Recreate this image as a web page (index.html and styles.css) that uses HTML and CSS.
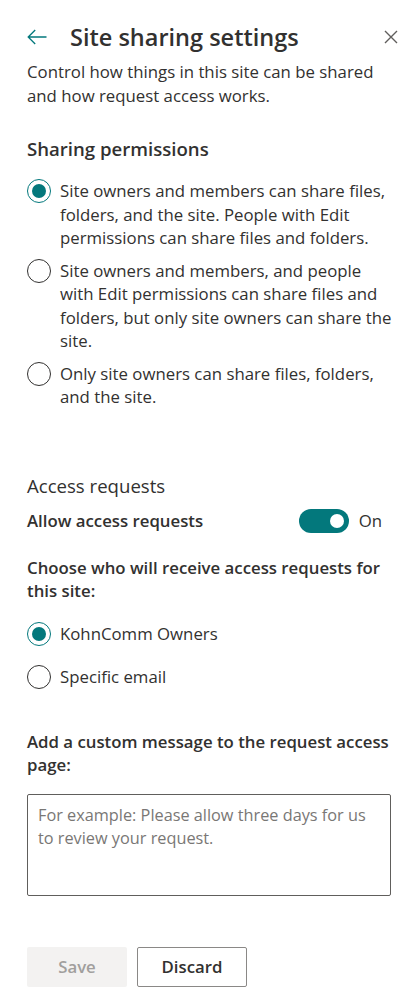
FILE: index.html
```html
<!DOCTYPE html>
<html lang="en">
<head>
<meta charset="utf-8">
<title>Site sharing settings</title>
<link rel="stylesheet" href="styles.css">
</head>
<body>
<div class="panel">
  <header class="header">
    <svg class="back" width="20" height="16" viewBox="0 0 20 16"><path d="M19.5 8H1.2M8.2 1L1.2 8l7 7" fill="none" stroke="#03787c" stroke-width="1.3"/></svg>
    <h1 class="title">Site sharing settings</h1>
    <svg class="close" width="14" height="14" viewBox="0 0 14 14"><path d="M1 1l12 12M13 1L1 13" fill="none" stroke="#605e5c" stroke-width="1.4"/></svg>
  </header>
  <p class="desc">Control how things in this site can be shared and how request access works.</p>

  <h2 class="section-title">Sharing permissions</h2>
  <div class="radios wide">
    <div class="radio checked"><span class="dot"></span><span class="label">Site owners and members can share files, folders, and the site. People with Edit permissions can share files and folders.</span></div>
    <div class="radio"><span class="dot"></span><span class="label">Site owners and members, and people with Edit permissions can share files and folders, but only site owners can share the site.</span></div>
    <div class="radio"><span class="dot"></span><span class="label">Only site owners can share files, folders, and the site.</span></div>
  </div>

  <h2 class="section-title light">Access requests</h2>
  <div class="toggle-row">
    <span class="strong">Allow access requests</span>
    <div class="toggle-wrap"><span class="toggle"><span class="knob"></span></span><span class="toggle-text">On</span></div>
  </div>
  <p class="strong choose">Choose who will receive access requests for this site:</p>
  <div class="radios spaced">
    <div class="radio checked"><span class="dot"></span><span class="label">KohnComm Owners</span></div>
    <div class="radio"><span class="dot"></span><span class="label">Specific email</span></div>
  </div>

  <p class="strong custom">Add a custom message to the request access page:</p>
  <div class="textarea"><span class="placeholder">For example: Please allow three days for us to review your request.</span></div>

  <div class="buttons">
    <button class="btn save" disabled>Save</button>
    <button class="btn discard">Discard</button>
  </div>
</div>
</body>
</html>
```

FILE: styles.css
```css
html, body {
  margin: 0;
  padding: 0;
  background: #ffffff;
}
body {
  font-family: "Open Sans", "Noto Sans", sans-serif;
  font-size: 16.8px;
  line-height: 23.5px;
  color: #323130;
}
.panel {
  padding: 20px 20px 0 27px;
}
.header {
  display: flex;
  align-items: center;
  height: 34px;
}
.back {
  flex: none;
  margin-right: 23px;
}
.title {
  flex: 1;
  margin: 0;
  font-size: 23.5px;
  font-weight: 600;
  color: #323130;
  line-height: 34px;
}
.close {
  flex: none;
  margin-right: -7px;
}
.desc {
  margin: 6px 0 0;
}
.section-title {
  margin: 29px 0 0;
  font-size: 18.6px;
  font-weight: 600;
  line-height: 26px;
}
.section-title.light {
  margin-top: 64px;
  font-weight: 400;
}
.radios {
  display: flex;
  flex-direction: column;
  gap: 9px;
  margin-top: 17px;
}
.radios.wide {
  margin-right: -4px;
}
.radios.spaced {
  gap: 19px;
  margin-top: 19px;
}
.radio {
  display: flex;
  align-items: flex-start;
}
.dot {
  flex: none;
  box-sizing: border-box;
  width: 24px;
  height: 24px;
  border: 1px solid #323130;
  border-radius: 50%;
  margin-right: 9px;
  position: relative;
}
.radio.checked .dot {
  border-color: #03787c;
}
.radio.checked .dot::after {
  content: "";
  position: absolute;
  left: 4px;
  top: 4px;
  width: 14px;
  height: 14px;
  border-radius: 50%;
  background: #03787c;
}
.label {
  flex: 1;
}
.strong {
  font-weight: 600;
}
.toggle-row {
  display: flex;
  align-items: center;
  justify-content: space-between;
  margin-top: 10px;
  padding-right: 9px;
}
.toggle-wrap {
  display: flex;
  align-items: center;
}
.toggle {
  box-sizing: border-box;
  width: 50px;
  height: 24px;
  border-radius: 12px;
  background: #03787c;
  display: flex;
  align-items: center;
  justify-content: flex-end;
  padding-right: 5px;
}
.knob {
  width: 14px;
  height: 14px;
  border-radius: 50%;
  background: #ffffff;
}
.toggle-text {
  margin-left: 10px;
}
.choose {
  margin: 23px 0 0;
}
.custom {
  margin: 41px 0 0;
}
.textarea {
  box-sizing: border-box;
  margin-top: 17px;
  height: 102px;
  border: 1px solid #605e5c;
  border-radius: 2px;
  padding: 9px 10px;
  font-size: 16.3px;
}
.placeholder {
  color: #797775;
}
.buttons {
  display: flex;
  gap: 10px;
  margin-top: 51px;
}
.btn {
  font-family: inherit;
  font-size: 16.8px;
  font-weight: 600;
  height: 40px;
  border-radius: 2px;
  padding: 0;
}
.save {
  width: 100px;
  background: #f3f2f1;
  border: none;
  color: #a19f9d;
}
.discard {
  width: 110px;
  background: #ffffff;
  border: 1px solid #8a8886;
  color: #323130;
}
```
